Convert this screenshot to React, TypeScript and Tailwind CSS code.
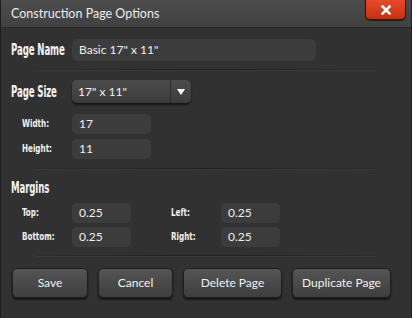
import React from "react";

const uiFont = { fontFamily: 'Lato, "Open Sans", sans-serif' };
const condFont = { fontFamily: '"DejaVu Sans Condensed", Roboto, sans-serif' };

function BigLabel({ text, w }: { text: string; w: string }) {
  return (
    <div className={`${w} shrink-0 flex items-center h-[18px] whitespace-nowrap`}>
      <span
        className="block origin-left scale-x-[0.64] text-[15px] leading-[18px] font-bold text-[#f4f4f4] tracking-[-0.2px]"
        style={condFont}
      >
        {text}
      </span>
    </div>
  );
}

function SmallLabel({ text, w }: { text: string; w: string }) {
  return (
    <div className={`${w} shrink-0 flex items-center h-[14px] whitespace-nowrap`}>
      <span
        className="block origin-left scale-x-[0.8] text-[10px] leading-[14px] font-bold text-[#f2f2f2]"
        style={condFont}
      >
        {text}
      </span>
    </div>
  );
}

function Field({ value, w }: { value: string; w: string }) {
  return (
    <div
      className={`${w} h-[20px] shrink-0 rounded-[5px] bg-[#3c3c3c] flex items-center pl-[7px] text-[12px] leading-[14px] text-[#f0f0f0]`}
      style={uiFont}
    >
      {value}
    </div>
  );
}

function Sep() {
  return (
    <div className="mx-[35px] h-[2px] bg-gradient-to-r from-[#2c2c2c] via-[#1f1f1f] to-[#2c2c2c] border-b border-[#393939]" />
  );
}

function Btn({ text, w }: { text: string; w: string }) {
  return (
    <div
      className={`${w} h-[30px] shrink-0 rounded-[5px] border border-[#1e1e1e] bg-gradient-to-b from-[#555555] to-[#3e3e3e] shadow-[0_2px_2px_rgba(0,0,0,0.6)] flex items-center justify-center text-[12px] leading-[14px] text-[#f2f2f2] whitespace-nowrap`}
      style={uiFont}
    >
      {text}
    </div>
  );
}

export default function App() {
  return (
    <div className="relative w-[412px] h-[318px] bg-[#313131] border-x border-[#1d1d1d] overflow-hidden flex flex-col text-[12px] leading-[14px]">
      <div className="h-[28px] shrink-0 bg-gradient-to-b from-[#4c4c4c] via-[#474747] to-[#414141] border-b border-[#2a2a2a] flex items-center pl-[10px]">
        <span className="text-[12.5px] text-[#ececec] whitespace-nowrap" style={uiFont}>
          Construction Page Options
        </span>
      </div>
      <div className="absolute right-[5px] top-0 w-[41px] h-[20px] rounded-b-[5px] border border-t-0 border-[#3a1008] bg-gradient-to-b from-[#e8472a] to-[#c8310f] flex items-center justify-center shadow-[0_1px_1px_rgba(0,0,0,0.5)]">
        <svg width="10" height="10" viewBox="0 0 10 10">
          <path d="M1.5 1.5 L8.5 8.5 M8.5 1.5 L1.5 8.5" stroke="#ffffff" strokeWidth="2.6" strokeLinecap="square" />
        </svg>
      </div>

      <div className="flex items-center mt-[11px] pl-[10px]">
        <BigLabel text="Page Name" w="w-[61px]" />
        <div
          className="w-[244px] h-[22px] shrink-0 rounded-[6px] bg-[#3c3c3c] flex items-center pl-[7px] text-[12px] text-[#f0f0f0]"
          style={uiFont}
        >
          Basic 17" x 11"
        </div>
      </div>

      <div className="mt-[8px]">
        <Sep />
      </div>

      <div className="flex items-center mt-[9px] pl-[10px]">
        <BigLabel text="Page Size" w="w-[61px]" />
        <div className="w-[119px] h-[23px] shrink-0 rounded-[5px] bg-gradient-to-b from-[#4c4c4c] to-[#3c3c3c] shadow-[0_2px_2px_rgba(0,0,0,0.6)] flex items-center">
          <div className="flex-1 pl-[6px] text-[12px] text-[#f2f2f2]" style={uiFont}>
            17" x 11"
          </div>
          <div className="w-[21px] h-full border-l border-[#2c2c2c] flex items-center justify-center">
            <svg width="8" height="6" viewBox="0 0 8 6">
              <path d="M0 0 L8 0 L4 6 Z" fill="#ffffff" />
            </svg>
          </div>
        </div>
      </div>

      <div className="flex items-center mt-[11px] pl-[21px]">
        <SmallLabel text="Width:" w="w-[50px]" />
        <Field value="17" w="w-[79px]" />
      </div>
      <div className="flex items-center mt-[5px] pl-[21px]">
        <SmallLabel text="Height:" w="w-[50px]" />
        <Field value="11" w="w-[79px]" />
      </div>

      <div className="mt-[9px]">
        <Sep />
      </div>

      <div className="mt-[9px] pl-[10px] flex items-center">
        <BigLabel text="Margins" w="w-[61px]" />
      </div>

      <div className="flex items-center mt-[6px] pl-[21px]">
        <SmallLabel text="Top:" w="w-[50px]" />
        <Field value="0.25" w="w-[59px]" />
        <div className="w-[40px] shrink-0" />
        <SmallLabel text="Left:" w="w-[50px]" />
        <Field value="0.25" w="w-[59px]" />
      </div>
      <div className="flex items-center mt-[4px] pl-[21px]">
        <SmallLabel text="Bottom:" w="w-[50px]" />
        <Field value="0.25" w="w-[59px]" />
        <div className="w-[40px] shrink-0" />
        <SmallLabel text="Right:" w="w-[50px]" />
        <Field value="0.25" w="w-[59px]" />
      </div>

      <div className="mt-[8px]">
        <Sep />
      </div>

      <div className="flex mt-[11px] pl-[11px] gap-[10px]">
        <Btn text="Save" w="w-[76px]" />
        <Btn text="Cancel" w="w-[75px]" />
        <Btn text="Delete Page" w="w-[99px]" />
        <Btn text="Duplicate Page" w="w-[99px]" />
      </div>
    </div>
  );
}
